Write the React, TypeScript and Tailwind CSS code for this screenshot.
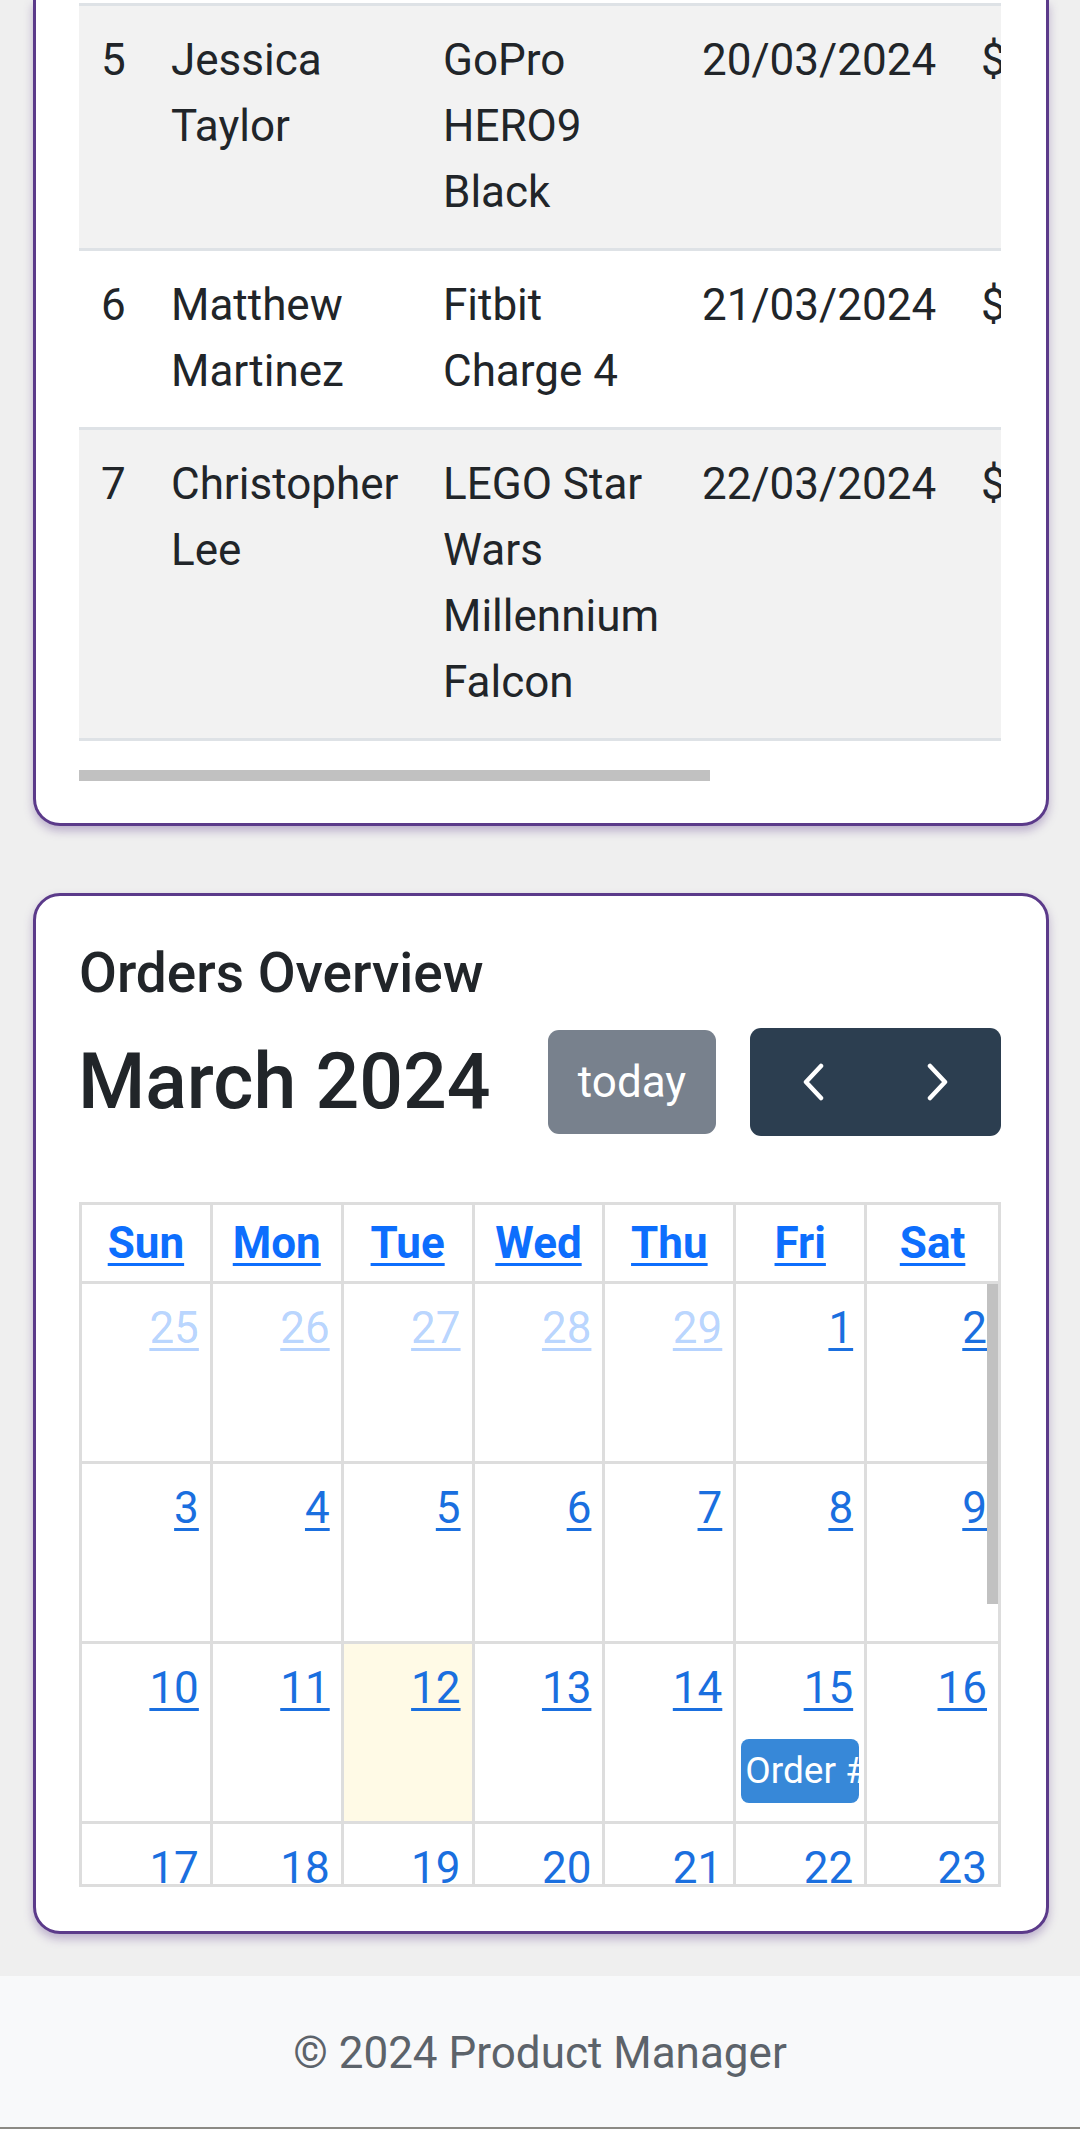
import React from "react";

type Row = { id: number; customer: string; product: string; date: string; amount: string };

const rows: Row[] = [
  { id: 5, customer: "Jessica Taylor", product: "GoPro HERO9 Black", date: "20/03/2024", amount: "$399.99" },
  { id: 6, customer: "Matthew Martinez", product: "Fitbit Charge 4", date: "21/03/2024", amount: "$149.95" },
  { id: 7, customer: "Christopher Lee", product: "LEGO Star Wars Millennium Falcon", date: "22/03/2024", amount: "$799.99" },
];

const dayNames = ["Sun", "Mon", "Tue", "Wed", "Thu", "Fri", "Sat"];

const weeks = [
  [25, 26, 27, 28, 29, 1, 2],
  [3, 4, 5, 6, 7, 8, 9],
  [10, 11, 12, 13, 14, 15, 16],
  [17, 18, 19, 20, 21, 22, 23],
];

function Chevron({ dir }: { dir: "left" | "right" }) {
  return (
    <svg width="24" height="38" viewBox="0 0 24 38" fill="none">
      <path
        d={dir === "left" ? "M20 3 L5 19 L20 35" : "M4 3 L19 19 L4 35"}
        stroke="white"
        strokeWidth="4.5"
        strokeLinecap="round"
        strokeLinejoin="round"
      />
    </svg>
  );
}

function OrdersTable() {
  return (
    <div className="ml-[33px] mr-[31px] bg-white border-x-[3px] border-b-[3px] border-[#5b3a8a] rounded-b-[27px] shadow-[0_5px_10px_rgba(91,58,138,0.35)] pl-[43px] pr-[45px] pt-[3px] pb-[38px]">
      <div className="w-[922px] overflow-hidden">
        <table className="table-fixed w-[1500px] text-[44px] leading-[66px] text-[#212529]">
          <colgroup>
            <col className="w-[70px]" />
            <col className="w-[272px]" />
            <col className="w-[259px]" />
            <col className="w-[279px]" />
            <col className="w-[300px]" />
            <col />
          </colgroup>
          <tbody>
            {rows.map((r, i) => (
              <tr key={r.id} className={i % 2 === 0 ? "bg-[#f2f2f2]" : "bg-white"}>
                {[String(r.id), r.customer, r.product, r.date, r.amount, "Delivered"].map((v, j) => (
                  <td
                    key={j}
                    className={
                      "align-top px-[22px] pt-[21px] pb-[23px] border-b-[3px] border-[#dee2e6] " +
                      (i === 0 ? "border-t-[3px]" : "")
                    }
                  >
                    {v}
                  </td>
                ))}
              </tr>
            ))}
          </tbody>
        </table>
      </div>
      <div className="mt-[29px] h-[11px] w-[631px] bg-[#c1c1c1]" />
      <div className="h-[4px]" />
    </div>
  );
}

function Calendar() {
  return (
    <div className="ml-[33px] mr-[31px] mt-[67px] bg-white border-[3px] border-[#5b3a8a] rounded-[27px] shadow-[0_5px_10px_rgba(91,58,138,0.35)] pl-[43px] pr-[45px] pt-[44px] pb-[44px]">
      <h5 className="text-[55px] leading-[66px] font-medium text-[#212529] mb-[22px]">Orders Overview</h5>

      <div className="flex items-center justify-between mb-[66px]">
        <h2 className="text-[77px] leading-[92px] font-medium text-[#212529] -ml-[1px]">March 2024</h2>
        <div className="flex items-center gap-[34px]">
          <div className="w-[168px] h-[104px] rounded-[11px] bg-[#78818d] flex items-center justify-center text-[44px] text-white">
            today
          </div>
          <div className="w-[251px] h-[108px] rounded-[11px] bg-[#2c3e50] flex">
            <div className="flex-1 flex items-center justify-center">
              <Chevron dir="left" />
            </div>
            <div className="flex-1 flex items-center justify-center">
              <Chevron dir="right" />
            </div>
          </div>
        </div>
      </div>

      <div className="w-[922px] border-[3px] border-[#dddddd]">
        <div className="grid grid-cols-7 border-b-[3px] border-[#dddddd]">
          {dayNames.map((d, i) => (
            <div
              key={d}
              className={
                "h-[76px] flex items-center justify-center " + (i < 6 ? "border-r-[3px] border-[#dddddd]" : "")
              }
            >
              <span className="text-[44px] leading-[66px] font-bold text-[#0d6efd] underline decoration-[3px] underline-offset-[5px]">
                {d}
              </span>
            </div>
          ))}
        </div>
        <div className="relative h-[600px] overflow-hidden">
          {weeks.map((w, wi) => (
            <div key={wi} className="grid grid-cols-7">
              {w.map((day, di) => {
                const other = wi === 0 && day > 20;
                const today = wi === 2 && day === 12;
                return (
                  <div
                    key={di}
                    className={
                      "h-[180px] border-b-[3px] border-[#dddddd] flex flex-col " +
                      (di < 6 ? "border-r-[3px] " : "") +
                      (today ? "bg-[#fffae6]" : "")
                    }
                  >
                    <div className="flex justify-end p-[11px]">
                      <span
                        className={
                          "text-[44px] leading-[66px] underline decoration-[3px] underline-offset-[5px] " +
                          (other ? "text-[#0d6efd]/30" : "text-[#1a6fdf]")
                        }
                      >
                        {day}
                      </span>
                    </div>
                    {wi === 2 && day === 15 && (
                      <div className="mx-[5px] mt-[7px] h-[64px] rounded-[8px] bg-[#3788d8] overflow-hidden whitespace-nowrap text-white text-[37px] leading-[64px] pl-[4px]">
                        Order #1015
                      </div>
                    )}
                  </div>
                );
              })}
            </div>
          ))}
          <div className="absolute right-0 top-0 w-[11px] h-[320px] bg-[#c1c1c1]" />
        </div>
      </div>
    </div>
  );
}

export default function App() {
  return (
    <div className="min-h-[2129px] bg-[#efefef] flex flex-col" style={{ fontFamily: "Roboto, 'Noto Sans', sans-serif" }}>
      <OrdersTable />
      <Calendar />
      <footer className="mt-[42px] bg-[#f8f9fa] flex-1 flex flex-col">
        <div className="flex-1 flex items-start justify-center pt-[44px] text-[44px] leading-[66px] text-[#5c636a]">
          © 2024 Product Manager
        </div>
        <div className="h-[2px] bg-[#8b8a84]" />
      </footer>
    </div>
  );
}
